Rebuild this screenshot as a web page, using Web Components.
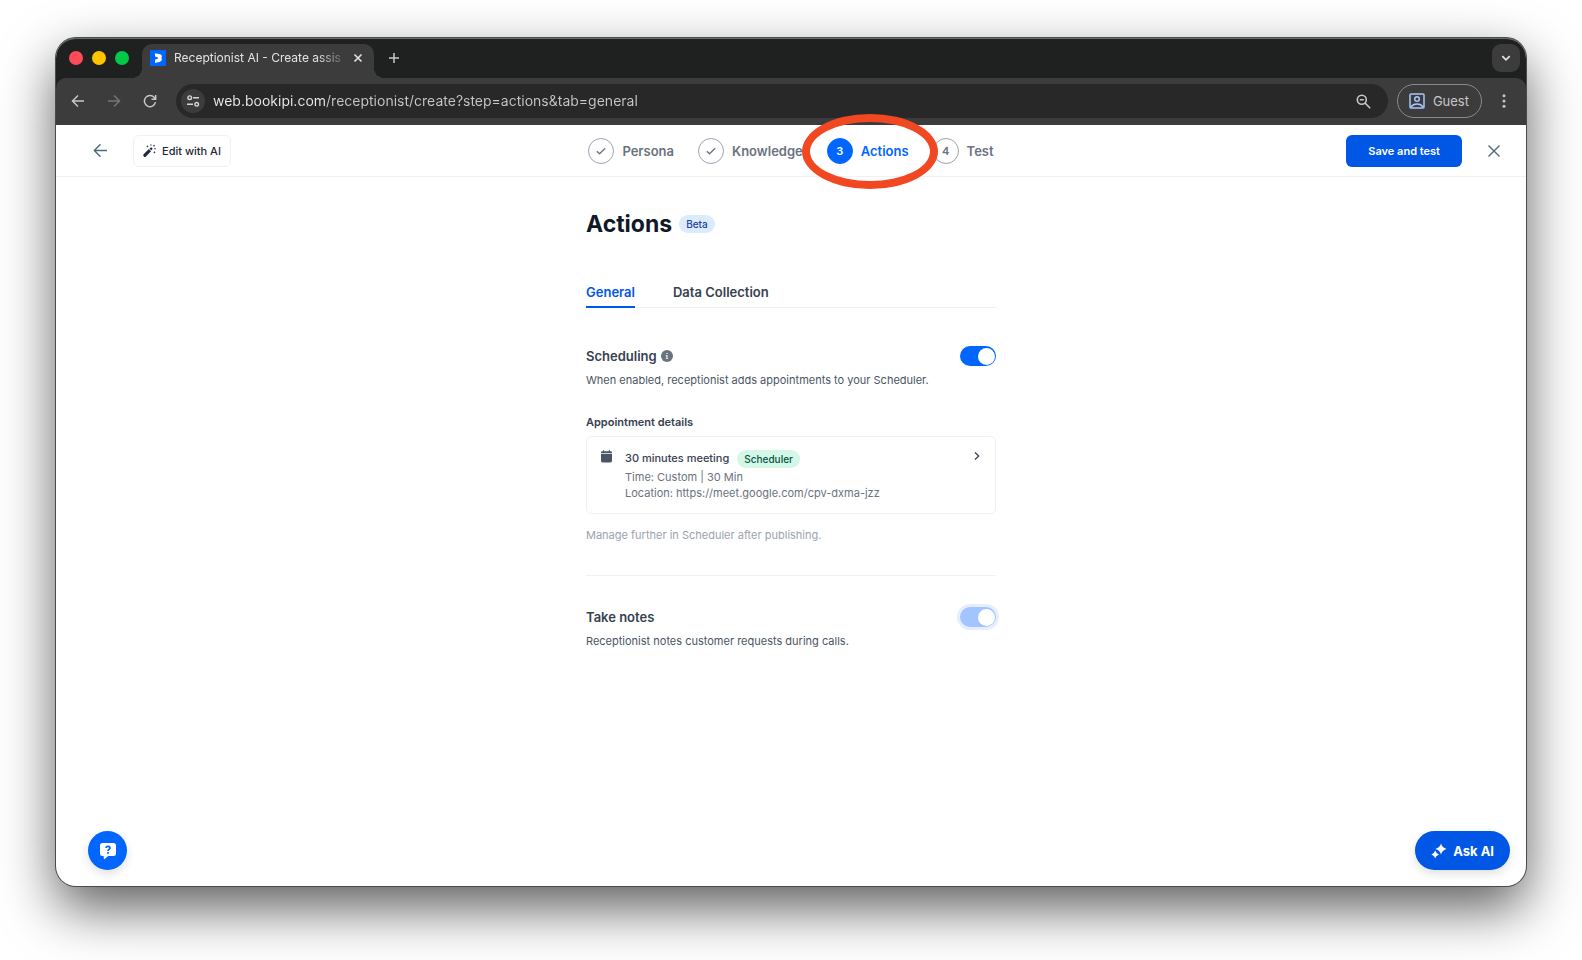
<!DOCTYPE html>
<html lang="en">
<head>
<meta charset="utf-8">
<title>Receptionist AI - Create assistant</title>
<style>
    body {
        margin: 0;
        background: #fff;
        font-family: Inter, "Liberation Sans", sans-serif;
        font-size: 11px;
        line-height: 16px;
        color: #374151;
    }
</style>
</head>
<body>
<browser-window>
    <tab-strip slot="chrome"></tab-strip>
    <browser-toolbar slot="chrome"></browser-toolbar>
    <receptionist-page></receptionist-page>
</browser-window>

<script>
// shared by every element below
const base = `
    * { box-sizing: border-box; }
    button { font: inherit; color: inherit; background: none; border: 0; padding: 0; margin: 0; cursor: pointer; }
    svg { display: block; flex: none; }
`;

class BaseElement extends HTMLElement {
    constructor() {
        super();
        this.attachShadow({ mode: "open" });
    }

    connectedCallback() {
        this.shadowRoot.innerHTML = `<style>${base}</style>${this.render()}`;
    }
}

// ---------- browser chrome ----------

class BrowserWindow extends BaseElement {
    render() {
        return `
            <style>
                :host { display: flex; box-sizing: border-box; min-height: 100vh; padding: 38px 56px 74px; }
                .window {
                    flex: 1;
                    display: flex;
                    flex-direction: column;
                    border-radius: 20px;
                    background: #fff;
                    box-shadow: 0 0 0 1px #4a4a4a, 0 22px 54px rgba(0, 0, 0, 0.64);
                }
                .chrome {
                    background: #1f2120;
                    border-radius: 20px 20px 0 0;
                    box-shadow: inset 0 1px 0 #6b6c6c;
                }
                ::slotted(receptionist-page) { flex: 1; }
            </style>
            <div class="window">
                <div class="chrome"><slot name="chrome"></slot></div>
                <slot></slot>
            </div>
        `;
    }
}

class TabStrip extends BaseElement {
    render() {
        return `
            <style>
                :host { display: flex; align-items: flex-end; height: 40px; padding: 0 6px 0 13px; color: #e3e3e3; font-size: 12px; }
                .lights { display: flex; gap: 9px; align-self: center; }
                .lights button { width: 14px; height: 14px; border-radius: 50%; }
                .tab {
                    position: relative;
                    display: flex;
                    align-items: center;
                    width: 232px;
                    height: 34px;
                    margin-left: 13px;
                    padding: 0 8px;
                    padding-bottom: 6px;
                    background: #3c3c3c;
                    border-radius: 10px 10px 0 0;
                }
                /* flared feet of the active tab */
                .tab::before, .tab::after {
                    content: "";
                    position: absolute;
                    bottom: 0;
                    width: 10px;
                    height: 10px;
                }
                .tab::before { left: -10px; background: radial-gradient(circle at 0 0, transparent 10px, #3c3c3c 10px); }
                .tab::after { right: -10px; background: radial-gradient(circle at 100% 0, transparent 10px, #3c3c3c 10px); }
                .title {
                    flex: 1;
                    margin-left: 8px;
                    white-space: nowrap;
                    -webkit-mask-image: linear-gradient(90deg, #000 84%, rgba(0, 0, 0, 0.2));
                    mask-image: linear-gradient(90deg, #000 84%, rgba(0, 0, 0, 0.2));
                }
                .close { margin: 0 3px 0 10px; }
                .new { margin: 0 auto 15px 15px; }
                .list {
                    display: grid;
                    place-items: center;
                    width: 28px;
                    height: 28px;
                    margin-bottom: 6px;
                    border-radius: 9px;
                    background: #3c3c3c;
                }
            </style>
            <div class="lights">
                <button style="background:#ff4b57" aria-label="Close window"></button>
                <button style="background:#ffc400" aria-label="Minimise window"></button>
                <button style="background:#00ca48" aria-label="Zoom window"></button>
            </div>
            <div class="tab">
                <svg width="16" height="16" viewBox="0 0 16 16">
                    <path fill="#0066ff" d="M0 0h16v16H0z"/>
                    <path fill="#fff" d="M5 3.200l5 1q1.900.6 1.900 2.300 0 .9-.7 1.500.8.6.7 1.600-.1 1.600-1.900 2.200L5 13V9.700l3-1.200v-.9L5 6.500z"/>
                </svg>
                <span class="title">Receptionist AI - Create assis</span>
                <button class="close" aria-label="Close tab">
                    <svg width="10" height="10" viewBox="0 0 10 10" fill="none" stroke="#e3e3e3" stroke-width="1.600"><path d="M1.500 1.500l7 7M8.500 1.500l-7 7"/></svg>
                </button>
            </div>
            <button class="new" aria-label="New tab">
                <svg width="10" height="10" viewBox="0 0 10 10" stroke="#c7c7c7" stroke-width="1.500"><path d="M5 0v10M0 5h10"/></svg>
            </button>
            <button class="list" aria-label="Search tabs">
                <svg width="10" height="10" viewBox="0 0 10 10" fill="none" stroke="#e3e3e3" stroke-width="1.700"><path d="M1.300 3.200L5 6.900l3.700-3.700"/></svg>
            </button>
        `;
    }
}

class BrowserToolbar extends BaseElement {
    render() {
        return `
            <style>
                :host {
                    display: flex;
                    align-items: center;
                    height: 47px;
                    padding: 0 15px 1px;
                    box-sizing: border-box;
                    background: #3c3c3c;
                    border-radius: 10px 10px 0 0;
                    color: #c7c7c7;
                }
                .nav { display: flex; gap: 22px; }
                .address {
                    flex: 1;
                    display: flex;
                    align-items: center;
                    height: 34px;
                    margin-left: 19px;
                    padding: 0 17px 0 5px;
                    border-radius: 17px;
                    background: #282828;
                }
                .site { display: grid; place-items: center; width: 24px; height: 24px; border-radius: 50%; background: #3c3c3c; }
                input {
                    flex: 1;
                    min-width: 0;
                    margin: 0 8px;
                    padding: 0;
                    border: 0;
                    outline: 0;
                    font: inherit;
                    font-size: 14px;
                    line-height: 20px;
                    color: #c7c7c7;
                    /* host name brighter than the path */
                    background: linear-gradient(90deg, #ececec 113px, #c7c7c7 113px);
                    -webkit-background-clip: text;
                    background-clip: text;
                    -webkit-text-fill-color: transparent;
                }
                .guest {
                    display: flex;
                    align-items: center;
                    gap: 8px;
                    height: 34px;
                    margin: 0 15px 0 9px;
                    padding: 0 12px 0 11px;
                    border: 1px solid #8a8a8a;
                    border-radius: 17px;
                    font-size: 13px;
                }
            </style>
            <div class="nav">
                <button aria-label="Back"><svg width="14" height="14" viewBox="0 0 14 14" fill="none" stroke="#c7c7c7" stroke-width="1.500"><path d="M13 7H2M7 1.500L1.500 7 7 12.500"/></svg></button>
                <button aria-label="Forward"><svg width="14" height="14" viewBox="0 0 14 14" fill="none" stroke="#757575" stroke-width="1.500"><path d="M1 7h11M7 1.500L12.500 7 7 12.500"/></svg></button>
                <button aria-label="Reload"><svg width="14" height="14" viewBox="0 0 14 14" fill="none" stroke="#c7c7c7" stroke-width="1.500"><path d="M12.500 8.200A5.600 5.600 0 1 1 11.600 3.800L12.600 5M12.700 1v4.200H8.500"/></svg></button>
            </div>
            <div class="address">
                <button class="site" aria-label="Site information">
                    <svg width="14" height="14" viewBox="0 0 14 14" fill="none" stroke="#d5d5d5" stroke-width="1.400"><circle cx="3.700" cy="3.700" r="1.800"/><path d="M7 3.700h6M1 10.300h6"/><circle cx="10.700" cy="10.300" r="1.800"/></svg>
                </button>
                <input type="text" aria-label="Address" value="web.bookipi.com/receptionist/create?step=actions&amp;tab=general">
                <button aria-label="Zoom level"><svg width="15" height="15" viewBox="0 0 15 15" fill="none" stroke="#c7c7c7" stroke-width="1.600"><circle cx="5.800" cy="5.800" r="4.500"/><path d="M9 9l5.200 5.200M3.800 5.800h4"/></svg></button>
            </div>
            <button class="guest">
                <svg width="16" height="16" viewBox="0 0 16 16" fill="none" stroke="#a8c7fa" stroke-width="1.500"><rect x="1" y="1" width="14" height="14" rx="1"/><circle cx="8" cy="6" r="2.300"/><path d="M2 14q1.800-3 6-3t6 3"/></svg>
                Guest
            </button>
            <button aria-label="Menu"><svg width="14" height="14" viewBox="0 0 14 14" fill="#c7c7c7"><circle cx="7" cy="1.800" r="1.500"/><circle cx="7" cy="7" r="1.500"/><circle cx="7" cy="12.200" r="1.500"/></svg></button>
        `;
    }
}

// ---------- page ----------

class StepItem extends BaseElement {
    render() {
        const state = this.getAttribute("state");
        const mark = state === "done"
            ? `<svg width="10" height="8" viewBox="0 0 10 8" fill="none" stroke="#6b7280" stroke-width="1.300"><path d="M.8 4.200l2.700 2.600L9.200 1.200"/></svg>`
            : this.getAttribute("number");
        return `
            <style>
                :host { display: block; position: relative; color: #6b7280; }
                button { display: flex; align-items: center; gap: 8px; font-size: 13px; font-weight: 600; line-height: 20px; }
                .mark {
                    display: grid;
                    place-items: center;
                    width: 26px;
                    height: 26px;
                    border: 1px solid #9ca3af;
                    border-radius: 50%;
                    font-size: 11px;
                }
                :host([state="current"]) { color: #0066ff; z-index: 1; }
                :host([state="current"]) .mark { background: #0066ff; border-color: #0066ff; color: #fff; }
                .ring {
                    position: absolute;
                    inset: -24px -29px -25px -25px;
                    border: 8px solid #f24822;
                    border-radius: 50%;
                    pointer-events: none;
                }
            </style>
            <button><span class="mark">${mark}</span><slot></slot></button>
            ${state === "current" ? `<span class="ring"></span>` : ""}
        `;
    }
}

class PageHeader extends BaseElement {
    render() {
        return `
            <style>
                :host {
                    display: grid;
                    grid-template-columns: 1fr auto 1fr;
                    align-items: center;
                    height: 52px;
                    padding: 0 25px;
                    border-bottom: 1px solid #f0f1f3;
                    box-sizing: border-box;
                }
                .left, .right, nav { display: flex; align-items: center; }
                .left { gap: 25px; padding-left: 12px; }
                .right { justify-content: flex-end; gap: 25px; }
                nav { gap: 24px; }
                .edit {
                    display: flex;
                    align-items: center;
                    gap: 6px;
                    height: 32px;
                    padding: 0 9px;
                    border: 1px solid #f0f1f3;
                    border-radius: 6px;
                    color: #1f2937;
                    font-weight: 500;
                }
                .save {
                    height: 32px;
                    padding: 0 22px;
                    border-radius: 6px;
                    background: #0057e6;
                    color: #fff;
                    font-weight: 600;
                }
            </style>
            <div class="left">
                <button aria-label="Back"><svg width="15" height="15" viewBox="0 0 15 15" fill="none" stroke="#4a6b7a" stroke-width="1.400"><path d="M14 7.500H1.500M7.500 1.300L1.300 7.500l6.200 6.200"/></svg></button>
                <button class="edit">
                    <svg width="13" height="13" viewBox="0 0 13 13" fill="#1f2937"><path d="M.4 10.600l5.500-5.500 2.200 2.200-5.500 5.500q-1 .6-1.800-.2t-.4-2zM6.500 4.600l.9-.9q1-.6 1.700.1t.1 1.600l-.9.900z"/><path d="M4.400 1.100l.4.9.9.4-.9.400-.4.900-.4-.9-.9-.4.900-.4zM11.400 7l.4.900.9.400-.9.400-.4.900-.4-.9-.9-.4.900-.4zM11 .5l.4.900.9.400-.9.400-.4.900-.4-.9-.9-.4.900-.4zM7.500.2h.9v1.500h-.9zM11.300 4.300h1.500v.9h-1.500z"/></svg>
                    Edit with AI
                </button>
            </div>
            <nav aria-label="Steps">
                <step-item state="done">Persona</step-item>
                <step-item state="done">Knowledge</step-item>
                <step-item state="current" number="3">Actions</step-item>
                <step-item number="4">Test</step-item>
            </nav>
            <div class="right">
                <button class="save">Save and test</button>
                <button aria-label="Close"><svg width="14" height="14" viewBox="0 0 14 14" fill="none" stroke="#4a6b7a" stroke-width="1.400"><path d="M1.500 1.500l11 11M12.500 1.500l-11 11"/></svg></button>
            </div>
        `;
    }
}

class PillBadge extends BaseElement {
    render() {
        return `
            <style>
                :host {
                    display: inline-block;
                    padding: 1px 7px;
                    border-radius: 9px;
                    background: #dbecff;
                    color: #1e429f;
                    font-size: 10px;
                    font-weight: 500;
                }
                :host([tone="green"]) { background: #d5f7e8; color: #03543f; }
            </style>
            <slot></slot>
        `;
    }
}

class SettingRow extends BaseElement {
    render() {
        return `
            <style>
                :host { display: flex; flex-direction: column; gap: 6px; }
                .top { display: flex; align-items: center; justify-content: space-between; height: 20px; }
                .name { display: flex; align-items: center; gap: 4px; }
                label { font-size: 13px; font-weight: 600; line-height: 20px; }
                p { margin: 0; color: #4b5563; }
                input {
                    appearance: none;
                    display: flex;
                    align-items: center;
                    justify-content: flex-end;
                    width: 36px;
                    height: 20px;
                    margin: 0;
                    padding: 1px;
                    border-radius: 10px;
                    background: #0066ff;
                }
                input::before { content: ""; width: 17px; height: 17px; border-radius: 50%; background: #fff; }
                :host([locked]) input { background: #a3c4ff; box-shadow: 0 0 0 3px #e3efff; }
            </style>
            <div class="top">
                <div class="name"><label for="toggle">${this.getAttribute("label")}</label><slot name="hint"></slot></div>
                <input type="checkbox" role="switch" id="toggle" checked ${this.hasAttribute("locked") ? "disabled" : ""}>
            </div>
            <p><slot></slot></p>
        `;
    }
}

class AppointmentCard extends BaseElement {
    render() {
        return `
            <style>
                :host { display: block; }
                button {
                    display: flex;
                    align-items: flex-start;
                    width: 100%;
                    padding: 13px 14px 12px 13px;
                    border: 1px solid #f0f1f3;
                    border-radius: 5px;
                    text-align: left;
                }
                .info { flex: 1; margin-left: 12px; color: #6b7280; }
                .title { display: flex; align-items: flex-start; gap: 8px; color: #374151; font-weight: 500; margin-bottom: 1px; }
            </style>
            <button>
                <svg width="13" height="13" viewBox="0 0 13 13" fill="#4b5563"><path d="M2 1.200h1V.3h1.200v.9h4.600V.3H10v.9h1q1 .1 1 1.100v1H1v-1q0-1 1-1.100zM1 4.100h11v6.700q-.1 1.500-1.600 1.600H2.600Q1.100 12.300 1 10.800z"/></svg>
                <span class="info">
                    <span class="title"><slot name="title"></slot></span>
                    <slot></slot>
                </span>
                <svg width="8" height="12" viewBox="0 0 8 12" fill="none" stroke="#374151" stroke-width="1.300"><path d="M2 2.500L5.700 6 2 9.500"/></svg>
            </button>
        `;
    }
}

class ActionsPanel extends BaseElement {
    render() {
        return `
            <style>
                :host { display: block; width: 410px; max-width: 100%; margin: 0 auto; padding-top: 31px; }
                .heading { display: flex; align-items: center; gap: 7px; }
                h1 { margin: 0; font-size: 23px; line-height: 32px; font-weight: 700; color: #111928; }
                [role="tablist"] { display: flex; gap: 38px; margin-top: 43px; border-bottom: 1px solid #f0f1f3; }
                [role="tab"] { height: 25px; padding-bottom: 5px; margin-bottom: -1px; border-bottom: 2px solid transparent; font-size: 13px; font-weight: 600; line-height: 18px; }
                [role="tab"][aria-selected="true"] { color: #0057e6; border-color: #0057e6; }
                .scheduling { margin-top: 38px; }
                h2 { margin: 26px 0 6px; font-size: 11px; line-height: 16px; font-weight: 600; }
                .note { margin: 13px 0 32px; color: #9ca3af; }
                .notes { padding-top: 31px; border-top: 1px solid #f0f1f3; }
                .line { display: block; }
            </style>
            <div class="heading"><h1>Actions</h1><pill-badge>Beta</pill-badge></div>
            <div role="tablist">
                <button role="tab" aria-selected="true">General</button>
                <button role="tab" aria-selected="false">Data Collection</button>
            </div>
            <setting-row class="scheduling" label="Scheduling">
                <svg slot="hint" width="12" height="12" viewBox="0 0 12 12"><circle cx="6" cy="6" r="6" fill="#6b7280"/><path fill="#fff" d="M5.400 2.900h1.200v1.200H5.400zM4.800 5h1.700v3h.6v.8H4.800V8h.6V5.800h-.6z"/></svg>
                When enabled, receptionist adds appointments to your Scheduler.
            </setting-row>
            <h2>Appointment details</h2>
            <appointment-card>
                <span slot="title">30 minutes meeting</span>
                <pill-badge slot="title" tone="green">Scheduler</pill-badge>
                <span class="line">Time: Custom | 30 Min</span>
                <span class="line">Location: https://meet.google.com/cpv-dxma-jzz</span>
            </appointment-card>
            <p class="note">Manage further in Scheduler after publishing.</p>
            <setting-row class="notes" label="Take notes" locked>Receptionist notes customer requests during calls.</setting-row>
        `;
    }
}

class ReceptionistPage extends BaseElement {
    render() {
        return `
            <style>
                :host { display: flex; flex-direction: column; }
                actions-panel { flex: 1; }
                footer { display: flex; justify-content: space-between; padding: 16px 16px 16px 32px; }
                footer button { display: flex; align-items: center; justify-content: center; height: 39px; border-radius: 20px; box-shadow: 0 4px 10px rgba(0, 0, 0, 0.12); }
                .help { width: 39px; background: #0066ff; }
                .ask { gap: 6px; padding: 0 16px; background: #0057e6; color: #fff; font-size: 13px; font-weight: 700; }
            </style>
            <page-header></page-header>
            <actions-panel></actions-panel>
            <footer>
                <button class="help" aria-label="Help">
                    <svg width="18" height="18" viewBox="0 0 18 18"><path fill="#fff" d="M3.500 1h11Q17 1 17 3.500v8Q17 14 14.500 14H9.200L5 17.500 4.600 14H3.500Q1 14 1 11.500v-8Q1 1 3.500 1z"/><path fill="none" stroke="#0066ff" stroke-width="1.700" d="M6.900 5.900Q7.100 4.300 9 4.300t2 1.600Q11 6.900 9.900 7.400 9 7.900 9 9"/><circle cx="9" cy="10.900" r="1" fill="#0066ff"/></svg>
                </button>
                <button class="ask">
                    <svg width="16" height="16" viewBox="0 0 16 16" fill="#fff"><path d="M10 .6q1.200 4.200 5.600 5.400Q11.200 7.200 10 11.400 8.800 7.200 4.400 6 8.800 4.800 10 .6zM4.200 7.500q.9 3 3.800 3.900-2.900.9-3.800 3.900-.9-3-3.800-3.900 2.900-.9 3.800-3.900z"/></svg>
                    Ask AI
                </button>
            </footer>
        `;
    }
}

customElements.define("browser-window", BrowserWindow);
customElements.define("tab-strip", TabStrip);
customElements.define("browser-toolbar", BrowserToolbar);
customElements.define("step-item", StepItem);
customElements.define("page-header", PageHeader);
customElements.define("pill-badge", PillBadge);
customElements.define("setting-row", SettingRow);
customElements.define("appointment-card", AppointmentCard);
customElements.define("actions-panel", ActionsPanel);
customElements.define("receptionist-page", ReceptionistPage);
</script>
</body>
</html>
